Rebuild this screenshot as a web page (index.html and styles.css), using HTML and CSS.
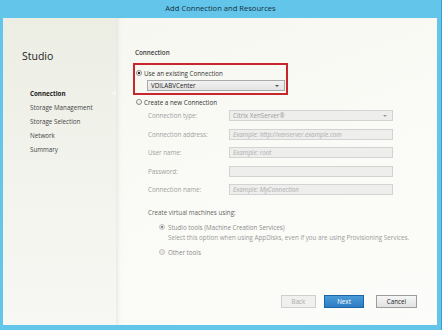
FILE: index.html
```html
<!DOCTYPE html>
<html lang="en">
<head>
  <meta charset="UTF-8">
  <meta name="viewport" content="width=device-width, initial-scale=1.0">
  <title>Add Connection and Resources</title>
  <link rel="stylesheet" href="styles.css">
</head>
<body>
  <div class="window">
    <div class="titlebar">Add Connection and Resources</div>
    <div class="frame">
      <aside class="sidebar">
        <h1>Studio</h1>
        <ul class="steps">
          <li class="active">Connection</li>
          <li>Storage Management</li>
          <li>Storage Selection</li>
          <li>Network</li>
          <li>Summary</li>
        </ul>
      </aside>

      <main class="page">
        <h2>Connection</h2>

        <div class="highlight">
          <label class="radio"><span class="dot checked"></span>Use an existing Connection</label>
          <div class="select">VDILABVCenter<span class="caret"></span></div>
        </div>
        <label class="radio new"><span class="dot"></span>Create a new Connection</label>

        <div class="form">
          <div class="row">
            <span class="label">Connection type:</span>
            <div class="field">Citrix XenServer®<span class="caret"></span></div>
          </div>
          <div class="row">
            <span class="label">Connection address:</span>
            <div class="field placeholder">Example: http://xenserver.example.com</div>
          </div>
          <div class="row">
            <span class="label">User name:</span>
            <div class="field placeholder">Example: root</div>
          </div>
          <div class="row">
            <span class="label">Password:</span>
            <div class="field"></div>
          </div>
          <div class="row">
            <span class="label">Connection name:</span>
            <div class="field placeholder">Example: MyConnection</div>
          </div>
        </div>

        <div class="section">
          <p class="section-title">Create virtual machines using:</p>
          <label class="radio off"><span class="dot checked"></span>Studio tools (Machine Creation Services)</label>
          <p class="hint">Select this option when using AppDisks, even if you are using Provisioning Services.</p>
          <label class="radio off other"><span class="dot"></span>Other tools</label>
        </div>

        <div class="buttons">
          <button class="btn back" disabled>Back</button>
          <button class="btn next">Next</button>
          <button class="btn cancel">Cancel</button>
        </div>
      </main>
    </div>
  </div>
</body>
</html>
```

FILE: styles.css
```css
* {
  margin: 0;
  padding: 0;
  box-sizing: border-box;
}

body {
  font-family: 'Open Sans', 'Liberation Sans', sans-serif;
  font-size: 6.25px;
  color: #333;
  width: 442px;
  height: 330px;
  overflow: hidden;
  background: #63c5ea;
}

.window {
  height: 330px;
  display: flex;
  flex-direction: column;
  background: #63c5ea;
  border-right: 1px solid #3b9fcf;
}

.titlebar {
  height: 18px;
  line-height: 16px;
  text-align: center;
  font-size: 7.6px;
  color: #15303f;
}

.frame {
  flex: 1;
  display: flex;
  margin: 0 4px 5px 3px;
}

/* left step list */
.sidebar {
  width: 113px;
  padding: 32px 0 0 19px;
  background: linear-gradient(to bottom, #ecede3, #f3f4ee 60%, #f7f8f3);
}

.sidebar h1 {
  font-size: 10.5px;
  font-weight: 400;
  line-height: 12px;
  color: #222;
}

.steps {
  list-style: none;
  margin-top: 25px;
  padding-left: 8px;
}

.steps li {
  line-height: 14px;
  color: #444;
}

.steps li.active {
  font-weight: 700;
  color: #222;
}

/* right page */
.page {
  flex: 1;
  position: relative;
  display: flex;
  flex-direction: column;
  padding: 31px 20px 17px 17px;
  background: linear-gradient(160deg, #f6f7f0, #fafbf6 50%, #fcfdfa);
  box-shadow: inset 4px 0 5px -3px rgba(0, 0, 0, 0.1);
}

.page::before {
  content: '';
  position: absolute;
  left: -4px;
  top: 72px;
  border-top: 3px solid transparent;
  border-bottom: 3px solid transparent;
  border-right: 4px solid #f7f8f2;
}

.page h2 {
  font-size: 6.3px;
  font-weight: 600;
  line-height: 8px;
  margin-left: 2px;
  color: #3c3c3c;
}

.highlight {
  width: 155px;
  margin-top: 6px;
  padding: 4px 2px 2px 1px;
  border: 2px solid #c8262d;
}

.radio {
  display: flex;
  align-items: center;
  gap: 2px;
  height: 8px;
  color: #333;
}

.dot {
  width: 6px;
  height: 6px;
  border-radius: 50%;
  border: 1px solid #8d8d8d;
  background: linear-gradient(#ffffff, #e4e4e4);
}

.dot.checked {
  background: radial-gradient(circle, #2a2a2a 0 1.2px, #fafafa 1.6px);
}

.radio.new {
  margin-top: 3px;
  padding-left: 3px;
}

.select {
  display: flex;
  align-items: center;
  justify-content: space-between;
  width: 138px;
  height: 11px;
  margin: 3px 0 0 11px;
  padding: 0 5px 0 3px;
  border: 1px solid #a9a9a9;
  background: linear-gradient(#f2f2f2, #e3e3e3);
  color: #1e1e1e;
}

.caret {
  border-left: 2px solid transparent;
  border-right: 2px solid transparent;
  border-top: 2px solid #555;
}

.form {
  display: flex;
  flex-direction: column;
  gap: 7.5px;
  margin-top: 4px;
  padding-left: 15px;
}

.row {
  display: flex;
  align-items: center;
  height: 11px;
}

.label {
  width: 81px;
  color: #a0a0a0;
}

.field {
  display: flex;
  align-items: center;
  justify-content: space-between;
  width: 164px;
  height: 11px;
  padding: 0 5px 0 3px;
  border: 1px solid #d3d3d3;
  background: #eeeeec;
  color: #9c9c9c;
}

.field .caret {
  border-top-color: #9a9a9a;
}

.field.placeholder {
  font-style: italic;
  color: #adadad;
}

.section {
  margin-top: 14px;
}

.section-title {
  line-height: 8px;
  padding-left: 15px;
  color: #666;
}

.radio.off {
  margin-top: 6px;
  padding-left: 26px;
  gap: 3px;
  color: #8a8a8a;
}

.radio.off .dot {
  border-color: #c4c4c4;
  background: #e9e9e7;
}

.radio.off .dot.checked {
  background: radial-gradient(circle, #8a8a8a 0 1.2px, #ececea 1.6px);
}

.hint {
  margin-top: 3px;
  padding-left: 35px;
  line-height: 8px;
  color: #999;
}

.radio.other {
  margin-top: 6px;
}

.buttons {
  margin-top: auto;
  display: flex;
  justify-content: flex-end;
  height: 13px;
}

.btn {
  font-family: inherit;
  font-size: 6.25px;
  height: 13px;
  border: 1px solid #9d9d9d;
  background: linear-gradient(#f6f6f6, #e2e2e2);
  color: #222;
}

.back {
  width: 35px;
  border-color: #cfcfcf;
  background: #f0f0ee;
  color: #aaaaaa;
}

.next {
  width: 40px;
  margin-left: 8px;
  border-color: #1e64a3;
  background: linear-gradient(#4a9bd8, #2c7cc3);
  color: #ffffff;
}

.cancel {
  width: 41px;
  margin-left: 12px;
}
```
